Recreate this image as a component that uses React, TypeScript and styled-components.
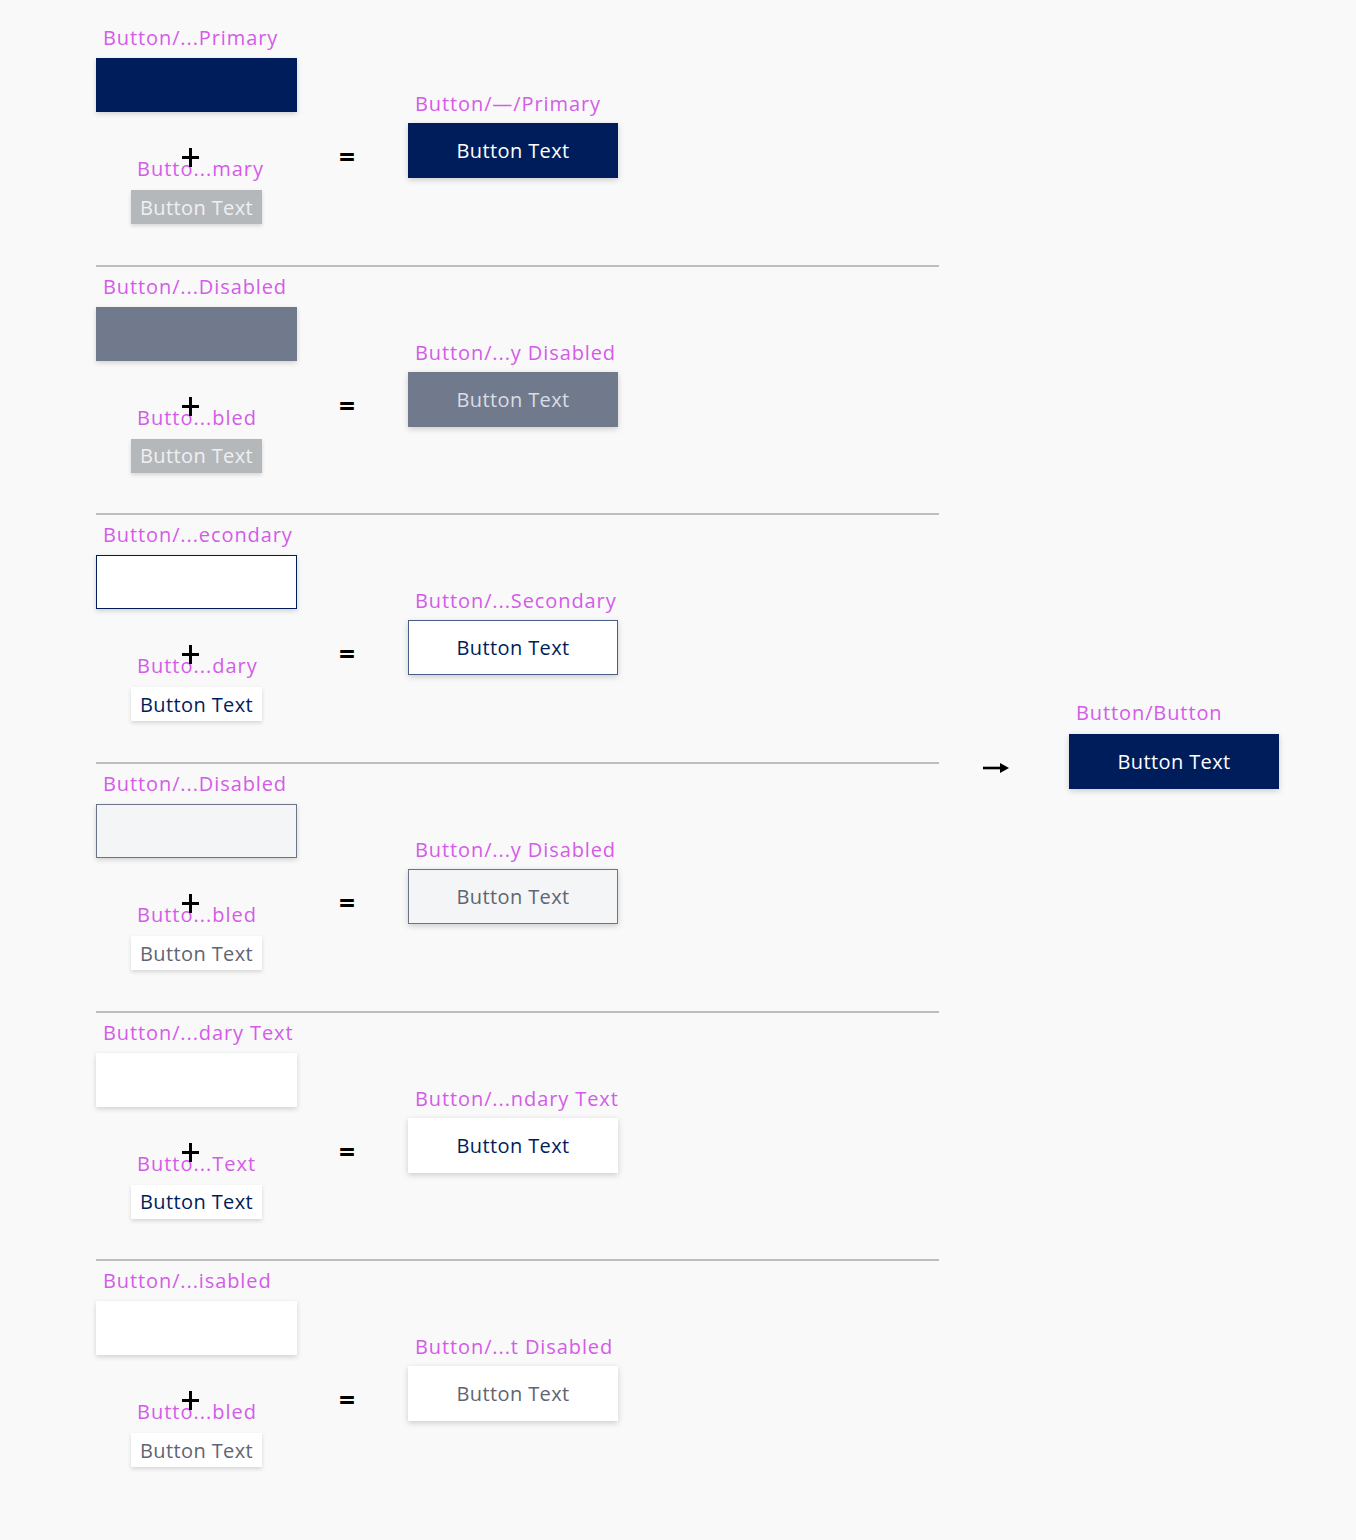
import React from 'react';
import styled, { createGlobalStyle, css } from 'styled-components';

const GlobalStyle = createGlobalStyle`
  html, body {
    margin: 0;
    padding: 0;
    background: #f9f9f9;
  }
  body {
    font-family: 'Open Sans', 'Noto Sans', sans-serif;
  }
`;

type Variant = 'primary' | 'disabled' | 'secondary' | 'secondaryDisabled' | 'text' | 'textDisabled';

const navy = '#001d5b';
const purple = '#d35ce8';

const Page = styled.div`
  width: 1356px;
  min-height: 1540px;
  box-sizing: border-box;
  padding: 18px 0 0 96px;
  display: flex;
  align-items: flex-start;
`;

const Column = styled.div`
  width: 843px;
  display: flex;
  flex-direction: column;
`;

const Section = styled.section`
  height: 246.7px;
  display: flex;
  align-items: flex-start;
`;

const Divider = styled.hr`
  margin: 0;
  border: none;
  height: 2px;
  background: #bbbec2;
`;

const Label = styled.div`
  color: ${purple};
  font-size: 20px;
  line-height: 24px;
  letter-spacing: 0.9px;
  white-space: nowrap;
  padding-left: 7px;
`;

const Source = styled.div`
  width: 201px;
  padding-top: 8px;
  display: flex;
  flex-direction: column;
`;

const swatch: Record<Variant, ReturnType<typeof css>> = {
  primary: css`background: ${navy};`,
  disabled: css`background: #717a8c;`,
  secondary: css`background: #fff; border: 1px solid ${navy};`,
  secondaryDisabled: css`background: #f4f5f6; border: 1px solid #6b7488;`,
  text: css`background: #fff;`,
  textDisabled: css`background: #fff;`,
};

const Swatch = styled.div<{ $variant: Variant }>`
  box-sizing: border-box;
  margin-top: 8px;
  width: 201px;
  height: 54px;
  box-shadow: 0 2px 5px rgba(0, 0, 0, 0.16);
  ${p => swatch[p.$variant]}
`;

const Overlay = styled.div`
  position: relative;
  margin: 45px 0 0 35px;
  display: flex;
  flex-direction: column;
  align-items: flex-start;
`;

const SmallLabel = styled(Label)`
  padding-left: 6px;
  letter-spacing: 1px;
`;

const Plus = styled.div`
  position: absolute;
  left: 51px;
  top: -9px;
  width: 17px;
  height: 19px;
  &::before, &::after {
    content: '';
    position: absolute;
    background: #000;
  }
  &::before {
    left: 0;
    top: 8px;
    width: 17px;
    height: 3px;
  }
  &::after {
    left: 7px;
    top: 0;
    width: 3px;
    height: 19px;
  }
`;

const smallLook: Record<Variant, ReturnType<typeof css>> = {
  primary: css`background: #b5b8bb; color: #eef0f2;`,
  disabled: css`background: #b5b8bb; color: #eef0f2;`,
  secondary: css`background: #fff; color: ${navy};`,
  secondaryDisabled: css`background: #fff; color: #5f6572;`,
  text: css`background: #fff; color: ${navy};`,
  textDisabled: css`background: #fff; color: #5f6572;`,
};

const SmallButton = styled.div<{ $variant: Variant }>`
  margin-top: 9px;
  width: 131px;
  height: 34px;
  display: flex;
  align-items: center;
  justify-content: center;
  font-size: 20px;
  letter-spacing: 0.4px;
  white-space: nowrap;
  box-shadow: 0 2px 4px rgba(0, 0, 0, 0.14);
  ${p => smallLook[p.$variant]}
`;

const Equals = styled.div`
  width: 100px;
  padding-top: 120px;
  display: flex;
  justify-content: center;
  font-size: 28px;
  line-height: 36px;
  font-weight: 700;
  color: #000;
`;

const Result = styled.div`
  margin-left: 11px;
  padding-top: 74px;
  display: flex;
  flex-direction: column;
`;

const bigLook: Record<Variant, ReturnType<typeof css>> = {
  primary: css`background: ${navy}; color: #fff;`,
  disabled: css`background: #717a8c; color: #d9dde4;`,
  secondary: css`background: #fff; color: ${navy}; border: 1px solid #4a5d88;`,
  secondaryDisabled: css`background: #f4f5f6; color: #5f6572; border: 1px solid #6b7488;`,
  text: css`background: #fff; color: ${navy};`,
  textDisabled: css`background: #fff; color: #5f6572;`,
};

const BigButton = styled.div<{ $variant: Variant }>`
  box-sizing: border-box;
  margin-top: 7px;
  width: 210px;
  height: 55px;
  display: flex;
  align-items: center;
  justify-content: center;
  font-size: 20px;
  letter-spacing: 0.4px;
  white-space: nowrap;
  box-shadow: 0 2px 6px rgba(0, 0, 0, 0.18);
  ${p => bigLook[p.$variant]}
`;

const Final = styled.div`
  padding-top: 683px;
  display: flex;
  align-items: flex-end;
`;

const Arrow = styled.div`
  width: 130px;
  height: 55px;
  display: flex;
  align-items: center;
  padding-left: 43px;
  box-sizing: border-box;
  padding-top: 13px;
`;

const FinalStack = styled.div`
  display: flex;
  flex-direction: column;
`;

const FinalButton = styled(BigButton)`
  margin-top: 9px;
`;

const rows: { source: string; small: string; result: string; variant: Variant }[] = [
  { source: 'Button/...Primary', small: 'Butto...mary', result: 'Button/—/Primary', variant: 'primary' },
  { source: 'Button/...Disabled', small: 'Butto...bled', result: 'Button/...y Disabled', variant: 'disabled' },
  { source: 'Button/...econdary', small: 'Butto...dary', result: 'Button/...Secondary', variant: 'secondary' },
  { source: 'Button/...Disabled', small: 'Butto...bled', result: 'Button/...y Disabled', variant: 'secondaryDisabled' },
  { source: 'Button/...dary Text', small: 'Butto...Text', result: 'Button/...ndary Text', variant: 'text' },
  { source: 'Button/...isabled', small: 'Butto...bled', result: 'Button/...t Disabled', variant: 'textDisabled' },
];

const App: React.FC = () => {
  return (
    <>
      <GlobalStyle />
      <Page>
        <Column>
          {rows.map((row, i) => (
            <React.Fragment key={i}>
              {i > 0 && <Divider />}
              <Section>
                <Source>
                  <Label>{row.source}</Label>
                  <Swatch $variant={row.variant} />
                  <Overlay>
                    <SmallLabel>{row.small}</SmallLabel>
                    <Plus />
                    <SmallButton $variant={row.variant}>Button Text</SmallButton>
                  </Overlay>
                </Source>
                <Equals>=</Equals>
                <Result>
                  <Label>{row.result}</Label>
                  <BigButton $variant={row.variant}>Button Text</BigButton>
                </Result>
              </Section>
            </React.Fragment>
          ))}
        </Column>
        <Final>
          <Arrow>
            <svg width="28" height="12" viewBox="0 0 28 12">
              <path d="M1 6 H24" stroke="#000" strokeWidth="2.6" fill="none" />
              <path d="M18 1 L27 6 L18 11 Z" fill="#000" />
            </svg>
          </Arrow>
          <FinalStack>
            <Label>Button/Button</Label>
            <FinalButton $variant="primary">Button Text</FinalButton>
          </FinalStack>
        </Final>
      </Page>
    </>
  );
};

export default App;
